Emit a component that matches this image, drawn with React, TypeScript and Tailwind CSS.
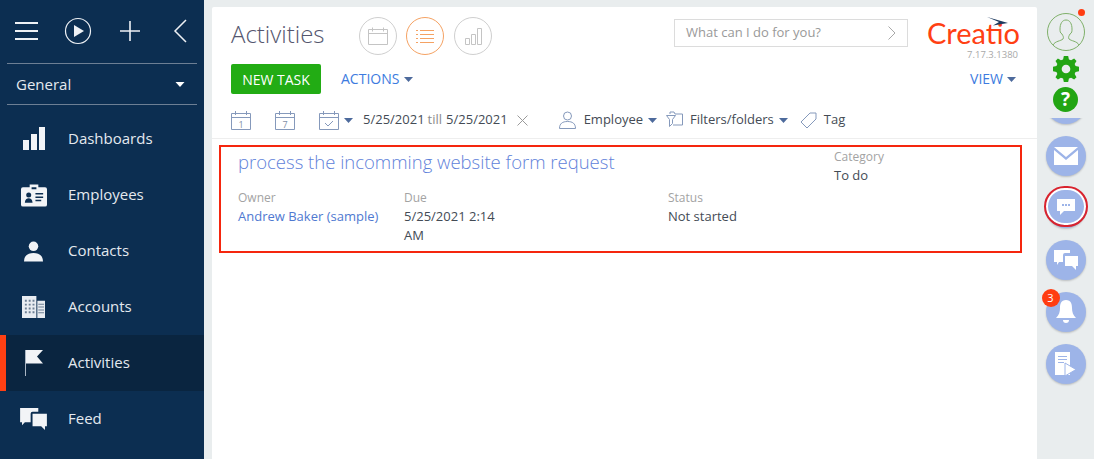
import { ReactNode } from "react";

const Caret = ({ className = "" }: { className?: string }) => (
  <svg width="9" height="5" viewBox="0 0 9 5" className={className}>
    <path d="M0 0h9L4.5 5z" fill="currentColor" />
  </svg>
);

const NavItem = ({ icon, label, active }: { icon: ReactNode; label: string; active?: boolean }) => (
  <div className={`flex h-14 items-center ${active ? "border-l-[6px] border-[#ff4013] bg-[#0a2540]" : ""}`}>
    <div className={`flex justify-center ${active ? "w-[62px]" : "w-[68px]"}`}>{icon}</div>
    <span className="pb-[2px] text-[15px] text-[#e4e9ef]">{label}</span>
  </div>
);

const Sidebar = () => (
  <div className="mr-2 flex h-full w-[204px] shrink-0 flex-col bg-[#0c2e51]">
    <div className="mx-[7px] flex h-[64px] items-center border-b border-[#6d7f94] pl-2 text-[#eef1f5]">
      <svg width="24" height="18" viewBox="0 0 24 18" stroke="currentColor" strokeWidth="2" className="mb-0.5">
        <path d="M0 1h23M0 9h23M0 17h23" />
      </svg>
      <svg width="28" height="28" viewBox="0 0 28 28" className="ml-[25px] mb-0.5">
        <circle cx="14" cy="14" r="12.5" fill="none" stroke="currentColor" strokeWidth="1.2" />
        <path d="M10 8l10 6-10 6z" fill="currentColor" />
      </svg>
      <svg width="22" height="22" viewBox="0 0 22 22" stroke="currentColor" strokeWidth="1.6" className="ml-[27px] mb-0.5">
        <path d="M11 1v20M1 11h20" />
      </svg>
      <svg width="14" height="24" viewBox="0 0 14 24" fill="none" stroke="currentColor" strokeWidth="1.5" className="ml-[32px] mb-0.5">
        <path d="M13 1L2 12l11 11" />
      </svg>
    </div>
    <div className="mx-[7px] flex h-[41px] items-center justify-between border-b border-[#6d7f94] pl-[9px] pr-[11px] text-[15px] text-[#e4e9ef]">
      General
      <Caret className="w-[12px] text-white" />
    </div>
    <div className="mt-[6px] flex flex-col">
      <NavItem
        label="Dashboards"
        icon={
          <svg width="22" height="24" viewBox="0 0 22 24" fill="#f2f4f7" className="mr-[1px]">
            <path d="M0 13h6v10H0zM8 7h6v16H8zM16 0h6v23h-6z" />
          </svg>
        }
      />
      <NavItem
        label="Employees"
        icon={
          <svg width="26" height="24" viewBox="0 0 27 24" className="mr-[1px]">
            <path d="M2 4h7V1h9v3h7a2 2 0 012 2v16a2 2 0 01-2 2H2a2 2 0 01-2-2V6a2 2 0 012-2z" fill="#f2f4f7" />
            <circle cx="8" cy="12" r="2.6" fill="#0c2e51" />
            <path d="M4 20c0-3 2-4.500 4-4.500s4 1.500 4 4.500zM15 10h8v1.500h-8zM15 13.500h8V15h-8zM15 17h6v1.500h-6zM11 4h5v2h-5z" fill="#0c2e51" />
          </svg>
        }
      />
      <NavItem
        label="Contacts"
        icon={
          <svg width="19" height="21" viewBox="0 0 20 21" fill="#f2f4f7" className="mr-[1px]">
            <circle cx="10" cy="5" r="5" />
            <path d="M0 21c0-6 4-9 10-9s10 3 10 9z" />
          </svg>
        }
      />
      <NavItem
        label="Accounts"
        icon={
          <svg width="23" height="23" viewBox="0 0 24 24" className="mr-[1px]">
            <path d="M0 0h15v23H0zM16 5h8v18h-8z" fill="#e8ecf1" />
            <path
              d="M3 4h2v2H3zM7 4h2v2H7zM11 4h2v2h-2zM3 8h2v2H3zM7 8h2v2H7zM11 8h2v2h-2zM3 12h2v2H3zM7 12h2v2H7zM11 12h2v2h-2zM3 16h2v2H3zM7 16h2v2H7zM11 16h2v2h-2zM17 8h6v1h-6zM17 11h6v1h-6zM17 14h6v1h-6zM17 17h6v1h-6z"
              fill="#6d7f94"
            />
          </svg>
        }
      />
      <NavItem
        active
        label="Activities"
        icon={
          <svg width="18" height="26" viewBox="0 0 18 26" fill="#f2f4f7" className="mr-[6px]">
            <path d="M0 0h1v26H0z" fill="#aab6c4" />
            <path d="M1 0h17l-6 6.500 6 7H1z" />
          </svg>
        }
      />
      <NavItem
        label="Feed"
        icon={
          <svg width="27" height="22" viewBox="0 0 28 23" fill="#f2f4f7" className="mr-[1px]">
            <path d="M0 0h19v4h-6a2 2 0 00-2 2v9H5l-3 3v-3H0z" />
            <path d="M13 6h15v13h-2v4l-4-4h-9z" />
          </svg>
        }
      />
    </div>
  </div>
);

const ViewCircle = ({ active, className = "", children }: { active?: boolean; className?: string; children: ReactNode }) => (
  <div
    className={`flex h-[38px] w-[38px] items-center justify-center rounded-full border ${
      active ? "border-[#f5a263] text-[#f5a263]" : "border-[#cfcfcf] text-[#c4c4c4]"
    } ${className}`}
  >
    {children}
  </div>
);

const CalIcon = ({ children }: { children?: ReactNode }) => (
  <svg width="20" height="20" viewBox="0 0 20 20" fill="none" stroke="#8599bb" className="shrink-0">
    <path d="M.5 3.500h19v16H.5zM.5 7.500h19M4.500 1v4M15.500 1v4" />
    {children}
  </svg>
);

const Toolbar = () => (
  <div className="flex h-[45px] items-center border-b border-[#eeeeee] pl-[19px] pt-[8px] text-[13px] text-[#444b55]">
    <CalIcon>
      <text x="10" y="17.500" fontSize="9" textAnchor="middle" fill="#7f8ea6" stroke="none" fontFamily="Open Sans">1</text>
    </CalIcon>
    <div className="ml-6">
      <CalIcon>
        <text x="10" y="17.500" fontSize="9" textAnchor="middle" fill="#7f8ea6" stroke="none" fontFamily="Open Sans">7</text>
      </CalIcon>
    </div>
    <div className="ml-6">
      <CalIcon>
        <path d="M6 13l3 3 5-5" />
      </CalIcon>
    </div>
    <Caret className="ml-[5px] text-[#4d6a9c]" />
    <span className="ml-[10px]">5/25/2021</span>
    <span className="ml-[3px] text-[#8c8c8c]">till</span>
    <span className="ml-[4px]">5/25/2021</span>
    <svg width="11" height="11" viewBox="0 0 11 11" stroke="#9a9a9a" className="ml-[9px]">
      <path d="M.5.500l10 10M10.500.500l-10 10" />
    </svg>
    <svg width="17" height="18" viewBox="0 0 17 18" fill="none" stroke="#8599bb" className="ml-[31px]">
      <circle cx="8.500" cy="5" r="4" />
      <path d="M.5 17.500c0-5 3-7 8-7s8 2 8 7z" />
    </svg>
    <span className="ml-[8px]">Employee</span>
    <Caret className="ml-[5px] text-[#4d6a9c]" />
    <svg width="17" height="18" viewBox="0 0 17 18" fill="none" stroke="#8599bb" className="ml-[9px]">
      <path d="M4 3V1h4l1 2h7.500v11H7M.5 4.500h9l-3 4v4l-3 3v-7z" />
    </svg>
    <span className="ml-[7px]">Filters/folders</span>
    <Caret className="ml-[5px] text-[#4d6a9c]" />
    <svg width="17" height="17" viewBox="0 0 17 17" fill="none" stroke="#8599bb" className="ml-[12px]">
      <path d="M10 1h6v6l-9 9-6-6zM12.500 3.500l.01.01" />
    </svg>
    <span className="ml-[7px]">Tag</span>
  </div>
);

const Field = ({ label, children }: { label: string; children: ReactNode }) => (
  <div>
    <div className="text-[12px] leading-[18px] text-[#a3a3a3]">{label}</div>
    <div className="text-[13px] leading-[19px] text-[#444b55]">{children}</div>
  </div>
);

const Main = () => (
  <div className="mt-[7px] flex min-w-0 flex-1 flex-col rounded-t-[2px] bg-white">
    <div className="flex h-[57px] items-start pl-[19px] pt-[12px]">
      <span className="w-[128px] text-[24px] leading-[30px] font-light text-[#54566e]">Activities</span>
      <div className="-mt-[2px] flex">
        <ViewCircle>
          <svg width="20" height="18" viewBox="0 0 20 18" fill="none" stroke="currentColor">
            <path d="M.5 2.500h19v15H.5zM.5 6.500h19M4.500.5v4M15.500.5v4" />
          </svg>
        </ViewCircle>
        <ViewCircle active className="ml-[9px]">
          <svg width="18" height="14" viewBox="0 0 18 14" stroke="currentColor">
            <path d="M0 1.500h2M4 1.500h14M0 5.500h2M4 5.500h14M0 9.500h2M4 9.500h14M0 13.500h2M4 13.500h14" />
          </svg>
        </ViewCircle>
        <ViewCircle className="ml-[10px]">
          <svg width="17" height="17" viewBox="0 0 17 17" fill="none" stroke="currentColor">
            <path d="M.5 10.500h4v6h-4zM6.500 6.500h4v10h-4zM12.500.5h4v16h-4z" />
          </svg>
        </ViewCircle>
      </div>
      <div className="ml-[182px] flex h-[28px] w-[234px] items-center justify-between border border-[#dcdcdc] pl-[11px] pr-[11px] text-[13px] text-[#999999]">
        What can I do for you?
        <svg width="8" height="14" viewBox="0 0 8 14" fill="none" stroke="#a8a8a8">
          <path d="M.5.500L7 7 .5 13.500" />
        </svg>
      </div>
      <div className="relative ml-[19px] flex w-[94px] flex-col items-end">
        <span className="mt-[-1px] pr-px font-['Lato'] text-[29px] leading-[29px] text-[#ff4013]">Creatio</span>
        <svg width="21" height="9" viewBox="0 0 21 9" className="absolute right-[13px] top-[-2px]">
          <path d="M0 0l21 6-15 2.500 6-3.500z" fill="#1d3a5f" />
        </svg>
        <span className="mt-[2px] pr-[3px] text-[9.500px] leading-[12px] text-[#a8a8a8]">7.17.3.1380</span>
      </div>
    </div>
    <div className="flex h-[30px] items-center pl-[19px] pr-[21px]">
      <div className="flex h-[30px] w-[90px] items-center justify-center rounded-[2px] bg-[#22ac14] text-[14px] text-white">
        NEW TASK
      </div>
      <span className="ml-5 pb-[2px] text-[14px] text-[#3d7be0]">ACTIONS</span>
      <Caret className="ml-[5px] text-[#4d6a9c]" />
      <span className="ml-auto pb-[2px] text-[14px] text-[#3d7be0]">VIEW</span>
      <Caret className="ml-[4px] text-[#4d6a9c]" />
    </div>
    <Toolbar />
    <div className="ml-[7px] mr-[15px] mt-[6px] grid h-[108px] grid-cols-[166px_264px_166px_1fr] border-2 border-[#f5260e] pl-[17px] pt-[1px]">
      <div className="col-span-3 text-[18.500px] leading-[28px] font-light text-[#5f82da]">process the incomming website form request</div>
      <Field label="Category">To do</Field>
      <div className="-mt-[3px]">
        <Field label="Owner">
          <span className="text-[#4f79d1]">Andrew Baker (sample)</span>
        </Field>
      </div>
      <div className="-mt-[3px] w-[110px]">
        <Field label="Due">5/25/2021 2:14 AM</Field>
      </div>
      <div className="-mt-[3px]">
        <Field label="Status">Not started</Field>
      </div>
    </div>
  </div>
);

const RailButton = ({ children, badge, ring }: { children: ReactNode; badge?: string; ring?: boolean }) => (
  <div className="relative flex h-10 w-10 shrink-0 items-center justify-center rounded-full bg-[#9db4e8] shadow-[0_1px_2px_rgba(0,0,0,0.2)]">
    {children}
    {ring && <div className="absolute -left-[2px] -right-[2px] -top-[2px] bottom-[1px] rounded-full border-2 border-[#d9232e] shadow-[inset_0_0_0_2px_#fff]" />}
    {badge && (
      <div className="absolute -left-1 -top-[3px] flex h-[18px] w-[18px] items-center justify-center rounded-full bg-[#ff3d12] text-[11px] text-white">
        {badge}
      </div>
    )}
  </div>
);

const Rail = () => (
  <div className="flex h-full w-[57px] shrink-0 flex-col items-center">
    <div className="relative mt-[13px] h-[38px] w-[38px] shrink-0 rounded-full border border-[#7fb069] overflow-visible">
      <svg width="36" height="36" viewBox="0 0 36 36" fill="none" stroke="#7fb069" strokeWidth="1">
        <path d="M5 31c2-4 8-4 10-6 1-2 0-3-1-5-2-1-2-3-2-5 0-5 2-9 6-9s6 4 6 9c0 2 0 4-2 5-1 2-2 3-1 5 2 2 8 2 10 6" />
      </svg>
      <div className="absolute -right-[1px] -top-[5px] h-[7px] w-[7px] rounded-full bg-[#ff3d12]" />
    </div>
    <svg width="26" height="26" viewBox="0 0 24 24" fill="#22a513" className="mt-[5px] shrink-0">
      <path d="M10 0h4l.7 3.200 2 .8L19.500 2.300l2.200 2.200L20 7.300l.8 2L24 10v4l-3.200.7-.8 2 1.700 2.800-2.200 2.200-2.800-1.700-2 .8L14 24h-4l-.7-3.200-2-.8-2.800 1.700-2.200-2.200L4 16.700l-.8-2L0 14v-4l3.200-.7.8-2-1.700-2.800 2.200-2.200L7.300 4l2-.8zM12 8a4 4 0 100 8 4 4 0 000-8z" />
    </svg>
    <div className="mt-[5px] flex h-[25px] w-[25px] shrink-0 items-center justify-center rounded-full bg-[#22a513] font-['Open_Sans'] text-[19px] leading-none font-bold text-white">
      ?
    </div>
    <div className="mt-[6px] flex w-full flex-1 flex-col items-center gap-3 overflow-hidden">
      <div className="mt-[-34px]">
        <RailButton>
          <span />
        </RailButton>
      </div>
      <RailButton>
        <svg width="24" height="18" viewBox="0 0 24 18" fill="#fff">
          <path d="M0 0h24L12 10zM0 3l12 10L24 3v15H0z" />
        </svg>
      </RailButton>
      <RailButton ring>
        <svg width="18" height="17" viewBox="0 0 18 17" className="-mt-[2px]">
          <path d="M0 0h18v12H7l-4 4v-4H0z" fill="#fff" />
          <path d="M5 5h2v2H5zM8 5h2v2H8zM11 5h2v2h-2z" fill="#9db4e8" />
        </svg>
      </RailButton>
      <RailButton>
        <svg width="24" height="20" viewBox="0 0 24 20" fill="#fff">
          <path d="M0 0h16v3h-5a2 2 0 00-2 2v7H5l-2 3v-3H0z" />
          <path d="M11 6h13v10h-2v4l-4-4h-7z" />
        </svg>
      </RailButton>
      <RailButton badge="3">
        <svg width="20" height="24" viewBox="0 0 20 24" fill="#fff">
          <path d="M10 0c5 0 6 4 6 8s1 7 4 10H0c3-3 4-6 4-10s1-8 6-8zM7 20h6a3 3 0 01-6 0z" />
        </svg>
      </RailButton>
      <RailButton>
        <svg width="22" height="24" viewBox="0 0 22 24">
          <path d="M0 0h15v23H0z" fill="#fff" />
          <path d="M10 11l11 6.500L10 24z" fill="#fff" stroke="#9db4e8" />
          <path d="M3 4h9v1H3zM3 7h9v1H3zM3 10h6v1H3z" fill="#9db4e8" />
        </svg>
      </RailButton>
    </div>
  </div>
);

export default function App() {
  return (
    <div className="flex h-[459px] w-[1094px] overflow-hidden bg-[#e9edee] font-['Open_Sans',sans-serif]">
      <Sidebar />
      <Main />
      <Rail />
    </div>
  );
}
